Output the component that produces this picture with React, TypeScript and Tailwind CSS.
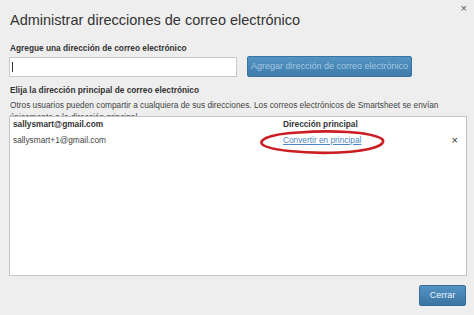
import React from 'react';

const font = { fontFamily: '"Liberation Sans", Arial, sans-serif' };

const App: React.FC = () => {
  return (
    <div
      className="relative w-[474px] h-[315px] overflow-hidden bg-[#eeeeee] text-[#333333] flex flex-col"
      style={font}
    >
      {/* Close */}
      <button className="absolute top-[2px] right-[7px] text-[11px] leading-[12px] text-[#555555]">
        ×
      </button>

      {/* Title */}
      <h1 className="pt-[11px] pl-[10px] text-[14.5px] leading-[18px] text-[#333333]">
        Administrar direcciones de correo electrónico
      </h1>

      {/* Add email */}
      <div className="mt-[14px] pl-[10px] text-[8.3px] leading-[10px] font-bold text-[#333333]">
        Agregue una dirección de correo electrónico
      </div>
      <div className="mt-[3px] flex items-start pl-[9px]">
        <div className="mt-px w-[228px] h-[20px] bg-white border border-[#c9c9c9] flex items-center pl-[2px]">
          <div className="w-px h-[10px] bg-[#333333]" />
        </div>
        <button className="ml-[10px] w-[165px] h-[21px] rounded-[2px] bg-gradient-to-b from-[#5394c4] to-[#3e7caa] border border-[#3a74a0] text-[9px] text-[#a6c8e2] leading-[19px]">
          Agregar dirección de correo electrónico
        </button>
      </div>

      {/* Primary email */}
      <div className="mt-[8px] pl-[10px] text-[8.3px] leading-[10px] font-bold text-[#333333]">
        Elija la dirección principal de correo electrónico
      </div>
      <div className="mt-[4px] pl-[10px] pr-[20px] h-[17px] overflow-hidden text-[8.3px] leading-[12px] text-[#444444]">
        Otros usuarios pueden compartir a cualquiera de sus direcciones. Los correos electrónicos de Smartsheet se envían únicamente a la dirección principal.
      </div>

      <div className="relative ml-[9px] w-[458px] h-[160px] bg-white border border-[#c4c4c4] text-[8.3px]">
        <div className="flex items-center h-[14px] leading-[14px] font-bold text-[#333333]">
          <div className="pl-[3px] w-[273px]">sallysmart@gmail.com</div>
          <div>Dirección principal</div>
        </div>
        <div className="mt-[2px] flex items-center h-[14px] leading-[14px] text-[#444444]">
          <div className="pl-[3px] w-[273px]">sallysmart+1@gmail.com</div>
          <a className="text-[#4f86c6] underline decoration-[#4f86c6]">Convertir en principal</a>
          <span className="ml-auto mr-[8px] text-[11px] text-[#333333]">×</span>
        </div>

        {/* Hand-drawn highlight */}
        <svg
          className="absolute left-[249px] top-[12px] pointer-events-none"
          width="128"
          height="26"
          viewBox="0 0 128 26"
        >
          <path
            d="M40 3.5 C70 1, 112 2.5, 123 10 C128 15, 116 22, 80 23.5 C45 25, 8 21, 3 15 C-1 9, 18 3.5, 50 3"
            fill="none"
            stroke="#cc1c24"
            strokeWidth="2.6"
            strokeLinecap="round"
          />
        </svg>
      </div>

      <div className="mt-[9px] flex justify-end pr-[8px]">
        <button className="w-[47px] h-[21px] rounded-[2px] bg-gradient-to-b from-[#5394c4] to-[#3a74a2] border border-[#356d98] text-[9px] leading-[19px] text-[#eef4fa]">
          Cerrar
        </button>
      </div>
    </div>
  );
};

export default App;
